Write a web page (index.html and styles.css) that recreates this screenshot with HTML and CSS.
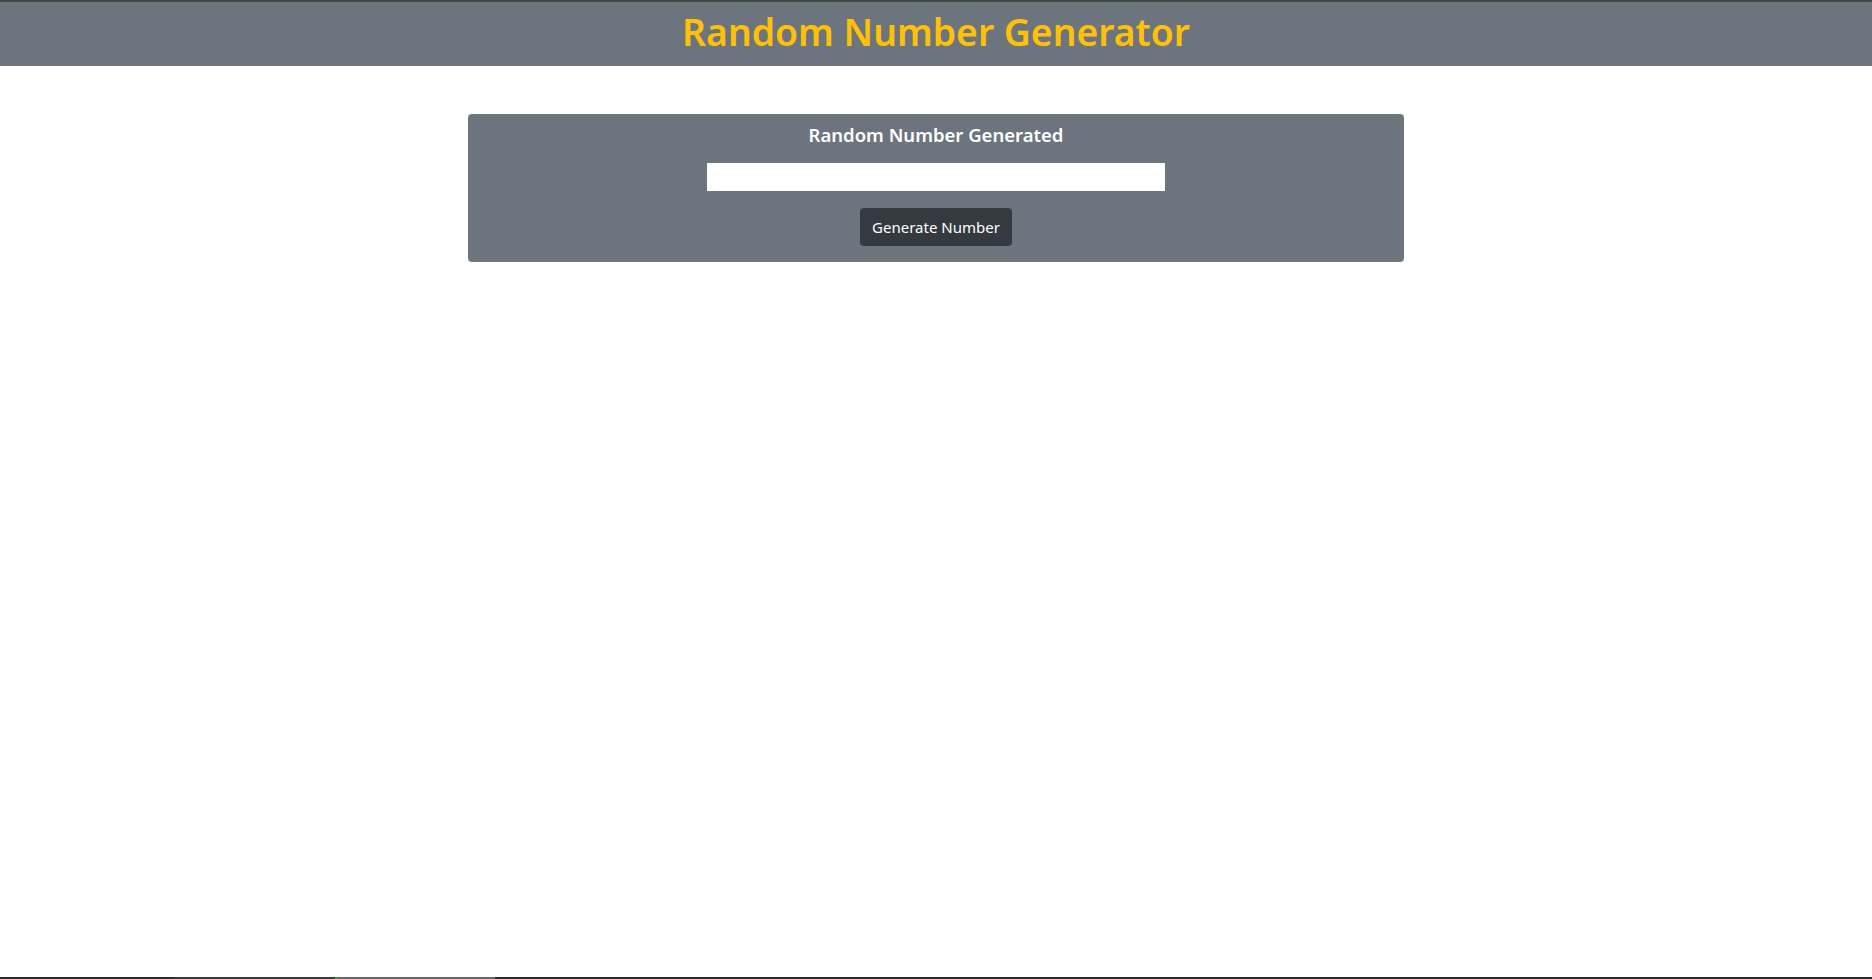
FILE: index.html
```html
<!DOCTYPE html>
<html lang="en">
<head>
<meta charset="utf-8">
<title>Random Number Generator</title>
<link rel="stylesheet" href="styles.css">
</head>
<body>
<header class="topbar">
  <h1 class="title">Random Number Generator</h1>
</header>
<main class="page">
  <section class="card">
    <h5 class="card-title">Random Number Generated</h5>
    <input class="result" type="text" readonly>
    <button class="btn" type="button">Generate Number</button>
  </section>
</main>
<div class="taskbar">
  <span class="seg seg-a"></span>
  <span class="seg seg-b"></span>
  <span class="seg seg-c"></span>
  <span class="seg seg-d"></span>
</div>
</body>
</html>
```
FILE: styles.css
```css
* { box-sizing: border-box; }
html, body { height: 100%; }
body {
  margin: 0;
  background: #fff;
  font-family: "Noto Sans", "Open Sans", sans-serif;
  color: #212529;
}
.topbar {
  background: #6c757d;
  border-top: 2px solid #464646;
  height: 66px;
  display: flex;
  align-items: center;
  justify-content: center;
}
.title {
  margin: 0 0 3px;
  color: #ffc107;
  font-size: 37.3px;
  font-weight: 600;
  line-height: 1.2;
}
.page {
  display: flex;
  justify-content: center;
  padding-top: 48px;
}
.card {
  width: 936px;
  background: #6c757d;
  border-radius: 4px;
  display: flex;
  flex-direction: column;
  align-items: center;
  padding: 9px 0 16px;
}
.card-title {
  margin: 0 0 16px;
  color: #fff;
  font-size: 18.5px;
  font-weight: 600;
  line-height: 24px;
}
.result {
  width: 458px;
  height: 28px;
  border: none;
  background: #fff;
  margin: 0 0 17px;
  padding: 0 6px;
  font: inherit;
}
.btn {
  background: #343a40;
  color: #fff;
  border: none;
  border-radius: 4px;
  height: 38px;
  width: 152px;
  padding: 0;
  font-family: inherit;
  font-size: 15px;
  line-height: 1.5;
}
.taskbar {
  position: fixed;
  left: 0;
  right: 0;
  bottom: 0;
  height: 2px;
  background: #2b2b2b;
  display: flex;
}
.seg { display: block; height: 100%; }
.seg-a { width: 174px; background: #2b2b2b; }
.seg-b { width: 161px; background: #3c3c3c; }
.seg-c { width: 3px; background: #5a8a5a; }
.seg-d { width: 157px; background: #666; }
```
